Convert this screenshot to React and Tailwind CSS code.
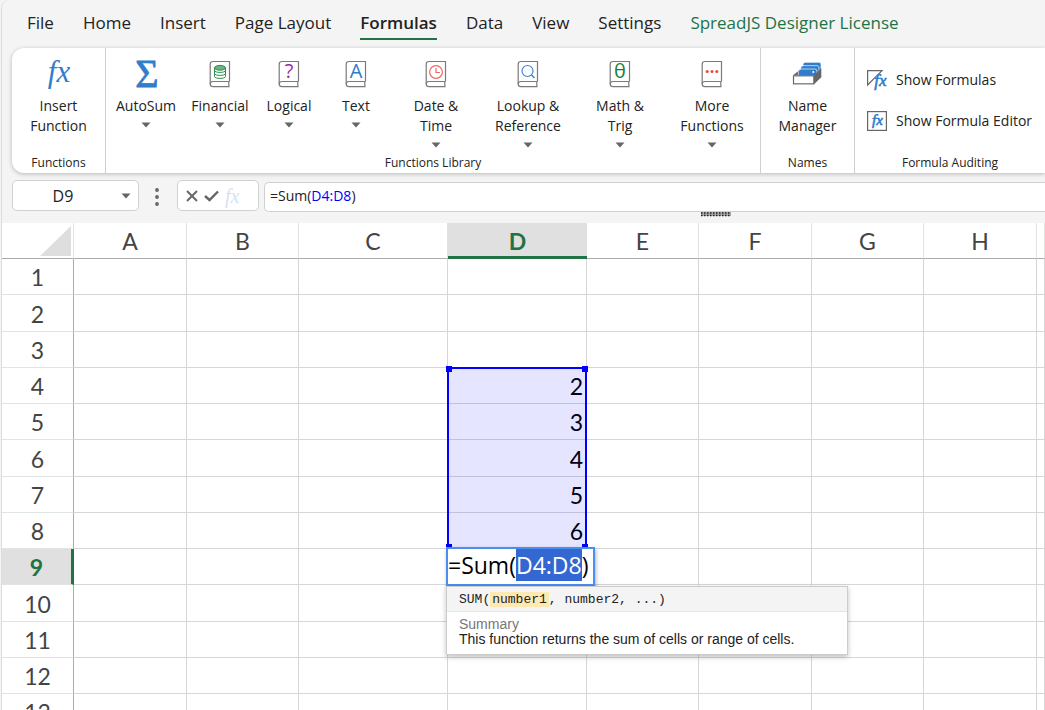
import { useState } from 'react';
import clsx from 'clsx';

const TABS = ['File', 'Home', 'Insert', 'Page Layout', 'Formulas', 'Data', 'View', 'Settings'];

const COLUMNS = [
  { name: 'A', width: 'w-[113px]' },
  { name: 'B', width: 'w-[112px]' },
  { name: 'C', width: 'w-[149px]' },
  { name: 'D', width: 'w-[139px]' },
  { name: 'E', width: 'w-[112px]' },
  { name: 'F', width: 'w-[113px]' },
  { name: 'G', width: 'w-[112px]' },
  { name: 'H', width: 'w-[113px]' },
  { name: '', width: '' },
];

const ROWS = [1, 2, 3, 4, 5, 6, 7, 8, 9, 10, 11, 12, 13];

const CELLS = { D4: 2, D5: 3, D6: 4, D7: 5, D8: 6 };

const BookIcon = ({ children }) => (
  <svg
    width="22"
    height="28"
    viewBox="0 0 22 28"
    fill="none"
    stroke="#7a7a7a"
    strokeWidth="1.2"
    className="overflow-visible"
  >
    <path d="M20.5 21.5V1.5H4Q1.2 1.5 1.2 4.2V24Q1.2 26.6 4 26.6H20.5" />
    <path d="M1.2 24Q1.2 21.5 4 21.5H20.5M19.8 21.5V26.6" />
    {children}
  </svg>
);

const BookText = ({ color, children }) => (
  <text
    x="11"
    y="18"
    textAnchor="middle"
    fontFamily="Open Sans, sans-serif"
    fontSize="20"
    fill={color}
    stroke="none"
  >
    {children}
  </text>
);

const FxIcon = () => (
  <svg width="36" height="40" viewBox="0 0 36 40">
    <text
      x="19"
      y="28"
      textAnchor="middle"
      fontFamily="Liberation Serif, serif"
      fontStyle="italic"
      fontSize="31"
      fill="#2f7dcb"
    >
      fx
    </text>
  </svg>
);

const SumIcon = () => (
  <svg width="36" height="48" viewBox="0 0 36 48">
    <text
      x="19"
      y="37"
      textAnchor="middle"
      fontFamily="Liberation Serif, serif"
      fontSize="40"
      fill="#2f7dcb"
      stroke="#2f7dcb"
      strokeWidth="0.8"
    >
      Σ
    </text>
  </svg>
);

const FinancialIcon = () => (
  <BookIcon>
    <g stroke="#2e9150" strokeWidth="1">
      <path d="M5.5 7.5V16.5C5.5 19 16.5 19 16.5 16.5V7.5" />
      <path d="M5.5 10.5C5.5 13 16.5 13 16.5 10.5M5.5 13.5C5.5 16 16.5 16 16.5 13.5" />
      <ellipse cx="11" cy="7.8" rx="5.5" ry="2.4" fill="#6bb583" />
    </g>
  </BookIcon>
);

const DateIcon = () => (
  <BookIcon>
    <circle cx="11" cy="12" r="6.4" stroke="#ee6a65" />
    <path d="M11 8V12.5H15" stroke="#ee6a65" />
  </BookIcon>
);

const LookupIcon = () => (
  <BookIcon>
    <circle cx="10.5" cy="11" r="5.5" stroke="#3f86d0" />
    <path d="M14.5 15L17.5 18" stroke="#3f86d0" strokeWidth="1.6" />
  </BookIcon>
);

const MoreIcon = () => (
  <BookIcon>
    <g fill="#e8483f" stroke="none">
      <circle cx="6.2" cy="11.5" r="1.5" />
      <circle cx="11" cy="11.5" r="1.5" />
      <circle cx="15.8" cy="11.5" r="1.5" />
    </g>
  </BookIcon>
);

const NameManagerIcon = () => (
  <svg width="30" height="28" viewBox="39 18 90 84">
    <path d="M42 64L62 48V64Z" fill="#666" />
    <g fill="#2f7dcb" stroke="#fff" strokeWidth="2">
      <path d="M72 30Q74 24 80 25H120Q127 25 126 32V50H72Z" />
      <path d="M65 42Q66 35 74 35H115Q121 36 120 42V60H65Z" />
      <path d="M58 52Q60 45 68 45H108Q115 46 114 52V66H58Z" />
    </g>
    <circle cx="103" cy="54" r="3" fill="#fff" />
    <path d="M105 64L127 42V70L105 91Z" fill="#666" />
    <rect x="43.5" y="65.5" width="61" height="24" fill="#fff" stroke="#666" strokeWidth="3.5" />
  </svg>
);

const ShowFormulasIcon = () => (
  <svg width="20" height="20" viewBox="0 0 20 20" className="overflow-visible">
    <path d="M0.6 0.6H15L0.6 15Z" fill="#fff" stroke="#666" strokeWidth="1.2" />
    <text
      x="13.5"
      y="15.5"
      textAnchor="middle"
      fontFamily="Liberation Serif, serif"
      fontStyle="italic"
      fontSize="17"
      fill="#2f7dcb"
      stroke="#2f7dcb"
      strokeWidth="0.6"
    >
      fx
    </text>
  </svg>
);

const FormulaEditorIcon = () => (
  <svg width="20" height="20" viewBox="0 0 20 20" className="overflow-visible">
    <rect x="0.6" y="0.6" width="18.8" height="18.8" fill="#fff" stroke="#666" strokeWidth="1.2" />
    <text
      x="10.5"
      y="14"
      textAnchor="middle"
      fontFamily="Liberation Serif, serif"
      fontStyle="italic"
      fontSize="15"
      fill="#2f7dcb"
      stroke="#2f7dcb"
      strokeWidth="0.6"
    >
      fx
    </text>
  </svg>
);

const Caret = ({ className }) => (
  <svg width="10" height="6" viewBox="0 0 10 6" className={className}>
    <path d="M0.5 0.5H9.5L5 5.5Z" fill="#666" />
  </svg>
);

const LIBRARY = [
  { lines: ['AutoSum'], icon: <SumIcon />, width: 'w-[76px]' },
  { lines: ['Financial'], icon: <FinancialIcon />, width: 'w-[72px]' },
  { lines: ['Logical'], icon: <BookIcon><BookText color="#a02ba8">?</BookText></BookIcon>, width: 'w-[66px]' },
  { lines: ['Text'], icon: <BookIcon><BookText color="#2f7dcb">A</BookText></BookIcon>, width: 'w-[68px]' },
  { lines: ['Date &', 'Time'], icon: <DateIcon />, width: 'w-[92px]' },
  { lines: ['Lookup &', 'Reference'], icon: <LookupIcon />, width: 'w-[92px]' },
  { lines: ['Math &', 'Trig'], icon: <BookIcon><BookText color="#1c7f3d">θ</BookText></BookIcon>, width: 'w-[92px]' },
  { lines: ['More', 'Functions'], icon: <MoreIcon />, width: 'w-[92px]' },
];

const RibbonButton = ({ lines, icon, width, menu }) => (
  <button type="button" className={clsx('flex flex-col items-center text-sm leading-5', width)}>
    <span className="flex h-7 items-center">{icon}</span>
    <span className="mt-2 flex flex-col items-center whitespace-nowrap">
      {lines.map((line) => (
        <span key={line}>{line}</span>
      ))}
    </span>
    {menu && <Caret className="mt-1.5" />}
  </button>
);

const RibbonGroup = ({ label, className, children }) => (
  <section
    aria-label={label}
    className={clsx('flex flex-col justify-between border-[#d0d0d0] pt-3 pb-px', className)}
  >
    {children}
    <div className="text-center text-xs leading-[18px]">{label}</div>
  </section>
);

const Ribbon = () => (
  <div className="ml-[10px] flex h-[125px] rounded-l-xl bg-white shadow-[0_1px_4px_rgba(0,0,0,0.25)]">
    <RibbonGroup label="Functions" className="w-[94px] shrink-0 items-center border-r">
      <RibbonButton lines={['Insert', 'Function']} icon={<FxIcon />} />
    </RibbonGroup>
    <RibbonGroup label="Functions Library" className="w-[655px] shrink-0 border-r">
      <div className="flex items-start pl-0.5">
        {LIBRARY.map((item) => (
          <RibbonButton key={item.lines[0]} {...item} menu />
        ))}
      </div>
    </RibbonGroup>
    <RibbonGroup label="Names" className="w-[94px] shrink-0 items-center border-r">
      <RibbonButton lines={['Name', 'Manager']} icon={<NameManagerIcon />} />
    </RibbonGroup>
    <RibbonGroup label="Formula Auditing" className="flex-1">
      <div className="flex flex-col items-start gap-[21px] pt-2.5 pl-3 text-sm leading-5 whitespace-nowrap">
        <button type="button" className="flex items-center gap-[9px]">
          <ShowFormulasIcon />
          Show Formulas
        </button>
        <button type="button" className="flex items-center gap-[9px]">
          <FormulaEditorIcon />
          Show Formula Editor
        </button>
      </div>
    </RibbonGroup>
  </div>
);

const FormulaBar = () => {
  const [cell, setCell] = useState('D9');

  return (
    <div className="flex items-start pt-[7px] pl-[10px]">
      <div className="flex h-[31px] w-[127px] items-center rounded-[5px] border border-[#d0d0d0] bg-white">
        <input
          aria-label="Name box"
          value={cell}
          onChange={(e) => setCell(e.target.value)}
          className="w-[100px] text-center text-base outline-none"
        />
        <button type="button" aria-label="Choose a name" className="ml-2">
          <Caret />
        </button>
      </div>
      <svg width="4" height="18" viewBox="0 0 4 18" fill="#666" className="mt-2 ml-4">
        <circle cx="2" cy="2" r="1.9" />
        <circle cx="2" cy="9" r="1.9" />
        <circle cx="2" cy="16" r="1.9" />
      </svg>
      <div className="ml-[18px] flex h-[31px] w-[82px] items-center rounded-[5px] border border-[#d0d0d0] bg-white pl-2">
        <button type="button" aria-label="Cancel">
          <svg width="12" height="12" viewBox="0 0 12 12" stroke="#666" strokeWidth="1.9">
            <path d="M1 1L11 11M11 1L1 11" />
          </svg>
        </button>
        <button type="button" aria-label="Enter" className="ml-1.5">
          <svg width="15" height="12" viewBox="0 0 15 12" fill="none" stroke="#666" strokeWidth="2.4">
            <path d="M1 6L5.5 10L14 1.5" />
          </svg>
        </button>
        <button
          type="button"
          aria-label="Insert function"
          className="ml-1.5 font-['Liberation_Serif',serif] text-xl leading-6 text-[#d3e3f4] italic"
        >
          fx
        </button>
      </div>
      <div
        role="textbox"
        aria-label="Formula bar"
        contentEditable
        suppressContentEditableWarning
        className="mt-0.5 ml-[5px] h-[30px] flex-1 rounded-l-[5px] border border-r-0 border-[#d0d0d0] bg-white pl-[5px] text-sm leading-[26px] outline-none"
      >
        =Sum(<span className="text-[#0000ff]">D4:D8</span>)
      </div>
    </div>
  );
};

const RangeOutline = () => (
  <div className="pointer-events-none absolute top-[-1px] left-[-1px] z-10 h-[182px] w-[140px] border-2 border-[#0000ff] bg-[#0000ff]/10">
    <span className="absolute top-[-3px] left-[-3px] size-1.5 bg-[#0000ff]" />
    <span className="absolute top-[-3px] right-[-3px] size-1.5 bg-[#0000ff]" />
    <span className="absolute bottom-[-3px] left-[-3px] size-1.5 bg-[#0000ff]" />
    <span className="absolute right-[-3px] bottom-[-3px] size-1.5 bg-[#0000ff]" />
  </div>
);

const CellEditor = () => (
  <div className="absolute top-[-2px] left-[-2px] z-20">
    <div
      role="textbox"
      aria-label="Cell D9"
      contentEditable
      suppressContentEditableWarning
      className="h-[39px] w-[149px] border-2 border-[#4a8ff0] bg-white text-left font-['Open_Sans',sans-serif] text-[23px] leading-8 whitespace-nowrap text-black shadow-[1px_2px_4px_rgba(0,0,0,0.3)] outline-none"
    >
      =Sum(<span className="bg-[#3367d1] text-white">D4:D8</span>)
    </div>
    <div className="w-[402px] border border-[#ccc] bg-white text-left font-['Liberation_Sans',Arial,sans-serif] text-sm text-[#222] shadow-[0_2px_5px_rgba(0,0,0,0.25)]">
      <div className="border-b border-[#e5e5e5] bg-[#f4f4f4] pt-px pl-3 font-['Liberation_Mono',monospace] text-[13px] leading-[23px]">
        SUM(<span className="bg-[#ffe9b3] px-0.5">number1</span>, number2, ...)
      </div>
      <div className="px-3 pt-[5px] pb-[7px] leading-[15px]">
        <p className="text-[#777]">Summary</p>
        <p>This function returns the sum of cells or range of cells.</p>
      </div>
    </div>
  </div>
);

const Sheet = () => (
  <table className="w-full table-fixed border-separate border-spacing-0 bg-white font-['Lato',Calibri,sans-serif] text-[23px] leading-none">
    <colgroup>
      <col className="w-[72px]" />
      {COLUMNS.map((col) => (
        <col key={col.name} className={col.width} />
      ))}
    </colgroup>
    <thead>
      <tr className="h-9">
        <th className="border-r border-b border-r-[#e4e4e4] border-b-[#ababab] p-0 pr-0.5">
          <svg width="31" height="30" viewBox="0 0 31 30" className="ml-auto">
            <path d="M31 0V30H0Z" fill="#dedede" />
          </svg>
        </th>
        {COLUMNS.map((col) => (
          <th
            key={col.name}
            scope="col"
            className={clsx(
              'p-0',
              col.name === 'D'
                ? 'border-b-3 border-[#217346] bg-[#e0e0e0] pt-1 font-bold text-[#217346]'
                : 'border-r border-b border-r-[#e0e4e0] border-b-[#ababab] pt-0.5 font-normal text-[#444]'
            )}
          >
            {col.name}
          </th>
        ))}
      </tr>
    </thead>
    <tbody>
      {ROWS.map((row) => (
        // row height is a little over 36px, every fourth row takes the extra one
        <tr key={row} className={row % 4 === 2 ? 'h-[37px]' : 'h-9'}>
          <th
            scope="row"
            className={clsx(
              'border-b border-b-[#dfe5df] p-0 pt-0.5',
              row === 9
                ? 'border-r-3 border-r-[#217346] bg-[#e0e0e0] font-bold text-[#217346]'
                : 'border-r border-r-[#ababab] font-normal text-[#444]'
            )}
          >
            {row}
          </th>
          {COLUMNS.map((col) => {
            const id = `${col.name}${row}`;
            return (
              <td
                key={id}
                className="relative border-r border-b border-[#d6d6d6] p-0 pt-0.5 pr-[3px] text-right text-black"
              >
                {CELLS[id]}
                {id === 'D4' && <RangeOutline />}
                {id === 'D9' && <CellEditor />}
              </td>
            );
          })}
        </tr>
      ))}
    </tbody>
  </table>
);

const App = () => {
  const [active, setActive] = useState('Formulas');

  return (
    <div className="h-screen overflow-hidden bg-[#f4f4f4] pl-px font-['Open_Sans',sans-serif] text-[#222]">
      <div className="h-full overflow-hidden rounded-tl-lg border-l border-[#dcdcdc]">
        <nav className="flex h-12 items-start gap-[29px] pt-2.5 pl-[25px] whitespace-nowrap">
          {TABS.map((tab) => (
            <button
              key={tab}
              type="button"
              onClick={() => setActive(tab)}
              className={clsx(
                'h-[30px] border-b-2 pb-0.5 text-[17px] leading-6',
                tab === active ? 'border-[#217346] font-semibold' : 'border-transparent'
              )}
            >
              {tab}
            </button>
          ))}
          <button
            type="button"
            className="h-[30px] border-b-2 border-transparent pb-0.5 text-[17px] leading-6 text-[#217346]"
          >
            SpreadJS Designer License
          </button>
        </nav>
        <Ribbon />
        <FormulaBar />
        <div className="flex h-[11px] justify-center pl-[384px]">
          <svg width="30" height="5" viewBox="0 0 30 5">
            <rect width="30" height="4" fill="#aaa" />
            <path d="M0 1H30M0 3.5H30" stroke="#222" strokeWidth="1.5" strokeDasharray="1.5 1.5" />
          </svg>
        </div>
        <Sheet />
      </div>
    </div>
  );
};

export default App;
